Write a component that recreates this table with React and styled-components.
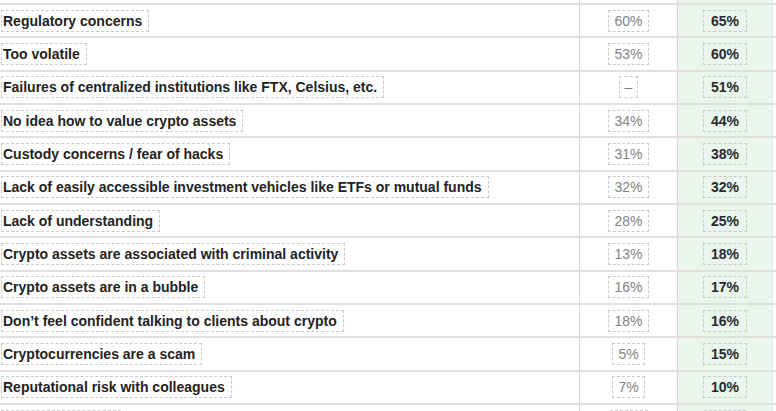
import React from "react";
import styled, { createGlobalStyle } from "styled-components";

const Global = createGlobalStyle`
  html, body { margin: 0; padding: 0; background: #ffffff; }
  body { font-family: "Liberation Sans", Arial, sans-serif; overflow: hidden; }
`;

const Table = styled.div`
  width: 776px;
  height: 411px;
  overflow: hidden;
  display: flex;
  flex-direction: column;
`;

const Row = styled.div`
  display: grid;
  grid-template-columns: 579px 98px 95px 1fr;
  height: ${(p) => (p.$stub ? "5px" : "33.333px")};
  flex: none;
  box-sizing: border-box;
  border-bottom: 2px solid #e0e0e0;
`;

const LabelCell = styled.div`
  display: flex;
  align-items: center;
  padding-left: 1px;
  min-width: 0;
`;

const ValueCell = styled.div`
  display: flex;
  align-items: center;
  justify-content: center;
  border-left: 1px solid #d8d8d8;
  background: ${(p) => (p.$highlight ? "#eaf5ee" : "transparent")};
`;

const EndCell = styled.div`
  border-left: 1px solid #e4e4e4;
`;

const Box = styled.span`
  display: inline-block;
  box-sizing: border-box;
  min-width: ${(p) => p.$minW || 0}px;
  min-height: 22px;
  text-align: center;
  border: 1px dashed #cbcbcb;
  font-size: 14px;
  line-height: 18px;
  padding: 1px ${(p) => p.$padX || 5}px 1px ${(p) => p.$padL ?? p.$padX ?? 5}px;
  white-space: nowrap;
`;

const Label = styled(Box)`
  font-weight: 700;
  color: #232323;
  text-align: left;
`;

const Prev = styled(Box)`
  font-weight: 400;
  color: #828282;
`;

const Curr = styled(Box)`
  font-weight: 700;
  color: #2b2b2b;
`;

const rows = [
  ["Regulatory concerns", "60%", "65%"],
  ["Too volatile", "53%", "60%"],
  ["Failures of centralized institutions like FTX, Celsius, etc.", "–", "51%"],
  ["No idea how to value crypto assets", "34%", "44%"],
  ["Custody concerns / fear of hacks", "31%", "38%"],
  ["Lack of easily accessible investment vehicles like ETFs or mutual funds", "32%", "32%"],
  ["Lack of understanding", "28%", "25%"],
  ["Crypto assets are associated with criminal activity", "13%", "18%"],
  ["Crypto assets are in a bubble", "16%", "17%"],
  ["Don’t feel confident talking to clients about crypto", "18%", "16%"],
  ["Cryptocurrencies are a scam", "5%", "15%"],
  ["Reputational risk with colleagues", "7%", "10%"],
];

export default function App() {
  return (
    <>
      <Global />
      <Table>
        <Row $stub>
          <LabelCell />
          <ValueCell />
          <ValueCell $highlight />
          <EndCell />
        </Row>
        {rows.map(([label, prev, curr]) => (
          <Row key={label}>
            <LabelCell>
              <Label $padL={1} $padX={6}>{label}</Label>
            </LabelCell>
            <ValueCell>
              <Prev $padX={5} $minW={19}>{prev}</Prev>
            </ValueCell>
            <ValueCell $highlight>
              <Curr $padX={7}>{curr}</Curr>
            </ValueCell>
            <EndCell />
          </Row>
        ))}
        <Row>
          <LabelCell>
            <Label $padL={1} $padX={6} $minW={120} />
          </LabelCell>
          <ValueCell>
            <Prev $minW={38} />
          </ValueCell>
          <ValueCell $highlight>
            <Curr $minW={42} />
          </ValueCell>
          <EndCell />
        </Row>
      </Table>
    </>
  );
}
